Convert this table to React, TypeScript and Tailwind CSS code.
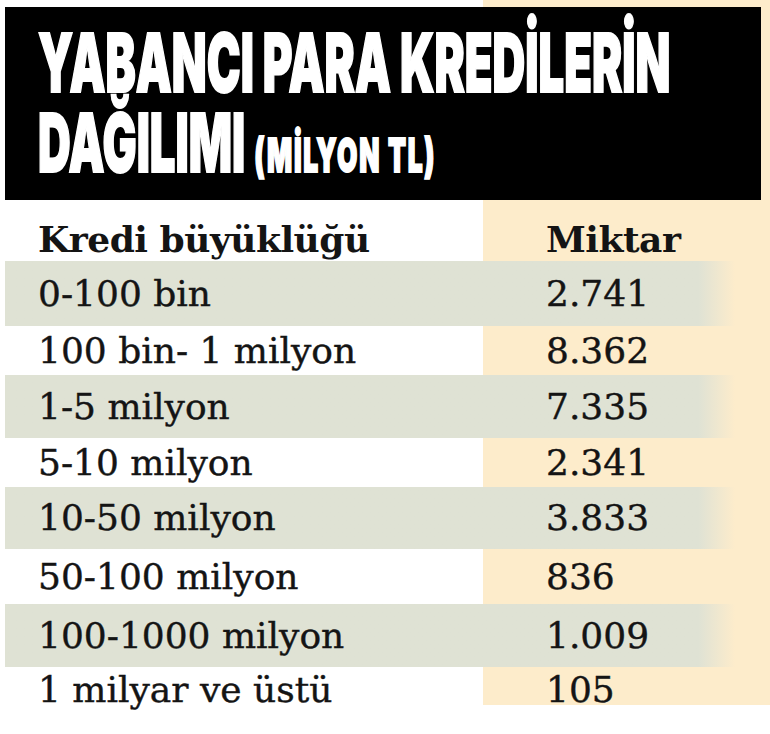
const rows = [
  { label: "0-100 bin", value: "2.741", h: "h-[65px]", shaded: true },
  { label: "100 bin- 1 milyon", value: "8.362", h: "h-[49px]", shaded: false },
  { label: "1-5 milyon", value: "7.335", h: "h-[63px]", shaded: true },
  { label: "5-10 milyon", value: "2.341", h: "h-[49px]", shaded: false },
  { label: "10-50 milyon", value: "3.833", h: "h-[62px]", shaded: true },
  { label: "50-100 milyon", value: "836", h: "h-[55px]", shaded: false },
  { label: "100-1000 milyon", value: "1.009", h: "h-[63px]", shaded: true },
  { label: "1 milyar ve üstü", value: "105", h: "h-[46px]", shaded: false },
];

const serif = "font-['DejaVu_Serif','Liberation_Serif',serif]";

export default function App() {
  return (
    <div className="relative w-[770px] h-[734px] overflow-hidden bg-white text-[#141414]">
      {/* beige column behind the amounts */}
      <div className="absolute left-[483px] top-0 w-[287px] h-[705px] bg-[#fdeccb]" />

      <div className="relative">
        {/* title */}
        <div className="mt-[7px] ml-[5px] w-[756px] h-[193px] bg-black overflow-hidden pt-[16px] pl-[33px] text-white font-['Inter',sans-serif] font-black [-webkit-text-stroke:2px_white]">
          <div className="origin-left scale-x-[0.56] whitespace-nowrap text-[81px] leading-[80px]">
            YABANCI PARA KREDİLERİN
          </div>
          <div className="origin-left scale-x-[0.56] whitespace-nowrap text-[81px] leading-[80px]">
            DAĞILIMI <span className="text-[47px] tracking-[3px]">(MİLYON TL)</span>
          </div>
        </div>

        {/* header */}
        <div className={`flex h-[61px] ml-[5px] pt-[19px] ${serif} font-bold text-[36px] leading-[40px] tracking-[-0.5px]`}>
          <div className="w-[541px] pl-[33px]">Kredi büyüklüğü</div>
          <div>Miktar</div>
        </div>

        {/* rows */}
        {rows.map((r) => (
          <div
            key={r.label}
            className={`flex items-center ml-[5px] w-[730px] ${r.h} ${serif} text-[36px] [-webkit-text-stroke:0.4px_#141414] ${
              r.shaded ? "bg-linear-to-r from-[#dfe2d4] from-[95%] to-[#fdeccb]" : ""
            }`}
          >
            <div className="w-[541px] pl-[33px] whitespace-nowrap">{r.label}</div>
            <div>{r.value}</div>
          </div>
        ))}
      </div>
    </div>
  );
}
